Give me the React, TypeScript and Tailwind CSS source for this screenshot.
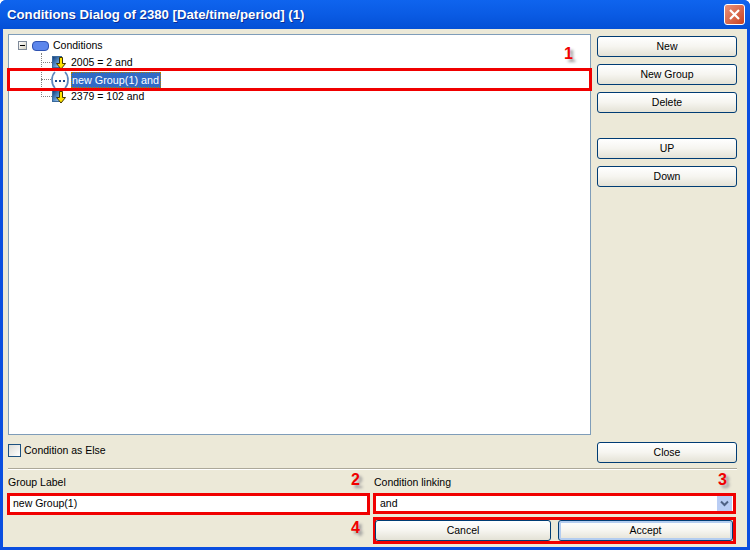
import React from 'react';

const Btn: React.FC<{ label: string; className?: string; focused?: boolean }> = ({ label, className = '', focused }) => (
    <button
        className={`h-[21px] rounded-[3px] border border-[#003c74] bg-gradient-to-b from-white via-[#f6f5f0] to-[#e4e2d6] pb-px text-[10.5px] leading-[16px] text-black ${focused ? 'shadow-[inset_0_0_0_2px_#b4cdf0]' : ''} ${className}`}
    >
        {label}
    </button>
);

const Num: React.FC<{ n: number; className: string }> = ({ n, className }) => (
    <span className={`absolute text-[16px] font-bold leading-none text-[#f00000] [text-shadow:3px_3px_3px_#9a9a9a] ${className}`}>{n}</span>
);

const CondIcon = () => (
    <svg width="16" height="16" viewBox="0 0 16 16" className="shrink-0">
        <defs>
            <linearGradient id="cond" x1="0" y1="0" x2="1" y2="1">
                <stop offset="0" stopColor="#12386e" />
                <stop offset="0.5" stopColor="#4f8ac8" />
                <stop offset="1" stopColor="#d6e8f8" />
            </linearGradient>
        </defs>
        <rect x="0.5" y="1.5" width="9" height="11" fill="url(#cond)" stroke="#3a6a9c" />
        <path d="M7.5 2.5h3v6h3l-4.5 5.5-4.5-5.5h3z" fill="#ffe400" stroke="#3f3400" strokeWidth="1" />
    </svg>
);

const GroupIcon = () => (
    <svg width="18" height="18" viewBox="0 0 18 18" className="shrink-0">
        <path d="M4 1C0 5 0 13 4 17" fill="none" stroke="#5f87bd" strokeWidth="1.7" />
        <path d="M14 1c4 4 4 12 0 16" fill="none" stroke="#5f87bd" strokeWidth="1.7" />
        <rect x="4" y="9" width="2" height="2" fill="#1f4a8a" />
        <rect x="8" y="9" width="2" height="2" fill="#1f4a8a" />
        <rect x="12" y="9" width="2" height="2" fill="#1f4a8a" />
    </svg>
);

const TreeRow: React.FC<{ children: React.ReactNode; wide?: boolean }> = ({ children, wide }) => (
    <div className="flex h-[17px] items-center pl-[32px]">
        <div className={`${wide ? 'w-[11px]' : 'w-[10px]'} border-t border-dotted border-[#808080]`}></div>
        {children}
    </div>
);

export default function App() {
    return (
        <div className="flex h-[550px] w-[750px] flex-col overflow-hidden rounded-t-[6px] bg-[#0a4ee0] font-['Liberation_Sans',Arial,sans-serif] text-[10.5px] text-black">
            <div className="flex h-[29px] shrink-0 items-center justify-between bg-gradient-to-b from-[#0f64ee] via-[#0a5be4] to-[#0450d6] pl-[7px] pr-[5px]">
                <span className="text-[13.2px] font-bold text-white [text-shadow:1px_1px_0_#0b2f96]">Conditions Dialog of 2380 [Date/time/period] (1)</span>
                <div className="flex h-[21px] w-[21px] items-center justify-center rounded-[3px] border border-white bg-gradient-to-br from-[#e8917a] to-[#c8401c]">
                    <svg width="13" height="13" viewBox="0 0 13 13">
                        <path d="M2 2l9 9M11 2l-9 9" stroke="#fff" strokeWidth="2.2" />
                    </svg>
                </div>
            </div>

            <div className="relative mx-[3px] mb-[3px] flex flex-1 flex-col bg-[#ece9d8] pl-[5px] pr-[10px] pt-[5px]">
                <div className="flex gap-[6px]">
                    <div className="relative h-[401px] w-[583px] shrink-0 border border-[#7f9db9] bg-white pt-[2px]">
                        {/* root node */}
                        <div className="flex h-[17px] items-center pl-[9px]">
                            <div className="flex h-[9px] w-[9px] items-center justify-center border border-[#7f8a99] bg-gradient-to-br from-white to-[#d4d0c0]">
                                <div className="h-px w-[5px] bg-black"></div>
                            </div>
                            <div className="ml-[5px] h-[10px] w-[17px] rounded-[4px] border border-[#2f52b0] bg-[#5c86ec]"></div>
                            <span className="ml-[4px]">Conditions</span>
                        </div>
                        <div className="absolute left-[32px] top-[18px] h-[42px] border-l border-dotted border-[#808080]"></div>
                        <TreeRow wide>
                            <CondIcon />
                            <span className="ml-[3px]">2005 = 2 and</span>
                        </TreeRow>
                        <TreeRow>
                            <GroupIcon />
                            <span className="ml-[2px] border border-dotted border-[#b08000] bg-[#316ac5] pr-px text-[10.8px] leading-[14px] text-white">new Group(1) and</span>
                        </TreeRow>
                        <TreeRow wide>
                            <CondIcon />
                            <span className="ml-[3px]">2379 = 102 and</span>
                        </TreeRow>
                        {/* annotation around the selected row */}
                        <div className="absolute left-[-2px] top-[33px] h-[23px] w-[585px] border-[3px] border-[#f00000]"></div>
                        <Num n={1} className="left-[555px] top-[11px]" />
                    </div>

                    <div className="flex w-[140px] shrink-0 flex-col pt-[2px]">
                        <Btn label="New" className="mb-[7px]" />
                        <Btn label="New Group" className="mb-[7px]" />
                        <Btn label="Delete" className="mb-[25px]" />
                        <Btn label="UP" className="mb-[7px]" />
                        <Btn label="Down" />
                    </div>
                </div>

                <div className="mt-[7px] flex h-[20px] items-start justify-between">
                    <label className="flex items-center pt-[2px]">
                        <span className="h-[13px] w-[13px] border border-[#1c5180] bg-gradient-to-br from-[#dcdcd7] to-white"></span>
                        <span className="ml-[3px] leading-[13px]">Condition as Else</span>
                    </label>
                    <Btn label="Close" className="w-[140px]" />
                </div>

                <div className="mt-[6px] h-[2px] w-[729px] border-y border-t-[#aca899] border-b-white"></div>

                <div className="ml-[-1px] mt-[6px] flex gap-[3px]">
                    <div className="flex w-[363px] flex-col">
                        <div className="h-[17px] pl-px leading-[13px]">Group Label</div>
                        <div className="flex h-[22px] items-center border-[3px] border-[#f00000] bg-white pl-[3px]">new Group(1)</div>
                    </div>
                    <div className="flex w-[363px] flex-col">
                        <div className="h-[17px] pl-px leading-[13px]">Condition linking</div>
                        <div className="flex h-[21px] items-center justify-between border-[3px] border-[#f00000] bg-white pl-[4px] pr-px">
                            <span>and</span>
                            <div className="flex h-[15px] w-[15px] items-center justify-center bg-[#b9cdf4]">
                                <svg width="9" height="7" viewBox="0 0 9 7">
                                    <path d="M1 1.5l3.5 3.5L8 1.5" fill="none" stroke="#4d6185" strokeWidth="2" />
                                </svg>
                            </div>
                        </div>
                        <div className="mt-[3px] flex h-[27px] gap-[7px] border-[3px] border-[#f00000]">
                            <Btn label="Cancel" className="ml-[-1px] w-[176px]" />
                            <Btn label="Accept" className="w-[175px]" focused />
                        </div>
                    </div>
                </div>

                <Num n={2} className="left-[348px] top-[443px]" />
                <Num n={3} className="left-[715px] top-[443px]" />
                <Num n={4} className="left-[348px] top-[491px]" />
            </div>
        </div>
    );
}
